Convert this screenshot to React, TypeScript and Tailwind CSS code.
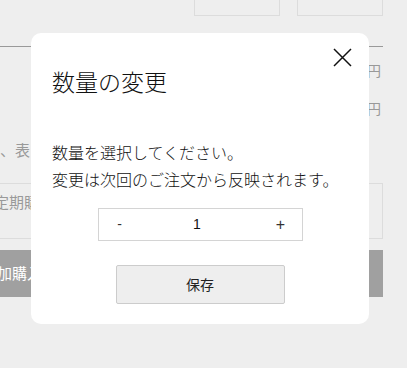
import React from 'react';

const jp = 'font-["Noto_Sans_CJK_JP","Noto_Sans",sans-serif]';

const CloseIcon = () => (
  <svg width="19" height="19" viewBox="0 0 19 19" fill="none" stroke="#111" strokeWidth="1.5">
    <path d="M1 1L18 18M18 1L1 18" />
  </svg>
);

export default function App() {
  return (
    <div className={`relative w-[407px] h-[368px] overflow-hidden bg-[#eeeeee] ${jp}`}>
      {/* page behind the dialog */}
      <div className="w-[383px]">
        <div className="flex justify-end gap-[17px]">
          <div className="w-[86px] h-[16px] border border-t-0 border-[#dcdcdc]" />
          <div className="w-[86px] h-[16px] border border-t-0 border-[#dcdcdc]" />
        </div>
        <div className="mt-[30px] border-t border-[#999]" />
        <div className="mt-[13px] h-[20px] leading-[20px] text-right pr-[2px] text-[14px] text-[#999]">円</div>
        <div className="mt-[18px] h-[20px] leading-[20px] text-right pr-[2px] text-[14px] text-[#999]">円</div>
        <div className="mt-[22px] h-[20px] leading-[20px] -ml-[15px] text-[15px] text-[#999] whitespace-nowrap">際、表</div>
        <div className="mt-[23px] h-[56px] border-y border-r border-[#dcdcdc] pt-[8px]">
          <div className="leading-[20px] -ml-[6px] text-[15px] text-[#999] whitespace-nowrap">定期購</div>
        </div>
        <div className="mt-[11px] h-[47px] bg-[#a0a0a0] flex items-center">
          <span className="-ml-[18px] text-[15px] text-white whitespace-nowrap">追加購入</span>
        </div>
      </div>

      {/* dialog */}
      <div className="absolute left-[31px] top-[33px] w-[338px] h-[291px] bg-white rounded-[10px] px-[21px]">
        <button className="absolute top-[15px] right-[17px] w-[19px] h-[19px]">
          <CloseIcon />
        </button>
        <h2 className="pt-[32px] text-[23px] leading-[32px] text-[#111] font-light">数量の変更</h2>
        <div className="mt-[42px] text-[16px] leading-[27px] text-[#111] font-light">
          <p>数量を選択してください。</p>
          <p>変更は次回のご注文から反映されます。</p>
        </div>
        <div className='mx-auto mt-[15px] w-[205px] h-[33px] border border-[#d4d4d4] flex items-center font-["Liberation_Sans",sans-serif] text-[14px]'>
          <button className="w-[42px] h-full text-[#333]">-</button>
          <div className="flex-1 text-center pr-[6px] text-[#111]">1</div>
          <button className="w-[42px] h-full text-[#333] text-[16px]">+</button>
        </div>
        <button className="block mx-auto mt-[24px] w-[169px] h-[39px] bg-[#eeeeee] border border-[#cccccc] rounded-[2px] text-[14px] text-[#222]">
          保存
        </button>
      </div>
    </div>
  );
}
